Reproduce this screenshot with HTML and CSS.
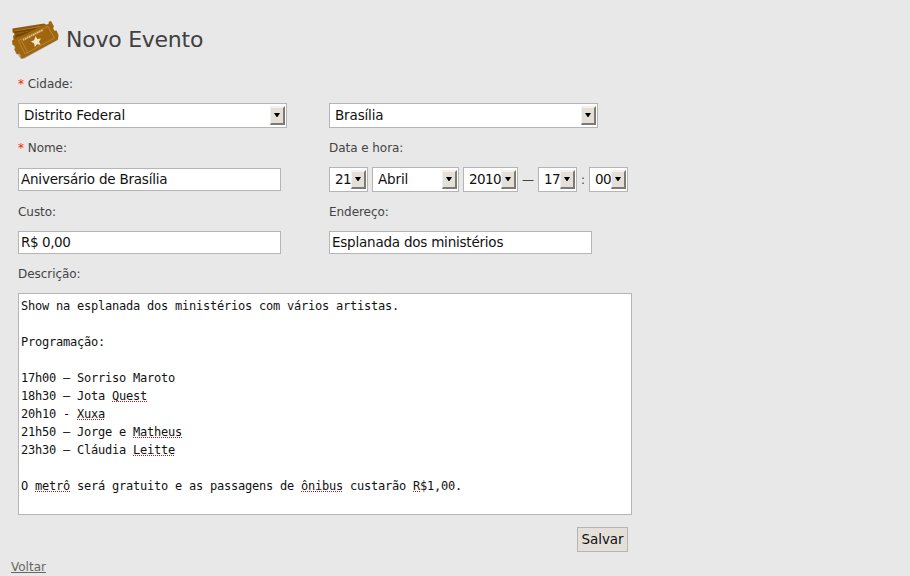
FILE: index.html
```html
<!DOCTYPE html>
<html lang="pt-BR">
<head>
<meta charset="utf-8">
<title>Novo Evento</title>
<link rel="stylesheet" href="styles.css">
</head>
<body>
<header class="header">
<svg class="logo" width="50" height="42" viewBox="0 0 50 42">
<path d="M1.500 8.500 33 3.500l7 5-5 14L3 22l-1-6 1.500-1-.5-2-1.500-.5z" fill="#8f590b"/>
<path d="M4 12 28 8M5 16l18-5" stroke="#6b4007" stroke-width="1.500"/>
<path d="M4 11 30 6.500" stroke="#c39345" stroke-width=".6"/>
<path d="M2 22 37 4l10 16-34 18.800-3 .2-3-4-2-1z" fill="#553409" opacity=".35"/>
<path d="M1 20.500 34 4.200l2 .6 1.800-1.300-.2-1.700 2.400-.8 3 5.500-1 1.700 1.500 2.500 2-.2 2 4.500-.5 4.500L13.500 37.500l-2.500 1-1.500-1.300.3-2-1.800-1.800-2 .6-2.800-4.500 1.300-1.700-1-2.300-2-.5z" fill="#a0650f"/>
<path d="M7.500 20.500 37 6.500 43.500 18 14 34zM10 19.500l6.500 12.700" fill="none" stroke="#c6943f" stroke-width=".7"/>
<path d="M12 20 32 10" stroke="#dcc08a" stroke-width="1.800" stroke-dasharray="1.500 .5 2 .5"/>
<path d="m24.500 16 1.800 3 3.700-.5-2 3.200 1.700 3.100-3.600-.5-2.300 2.700-.7-3.700-3.200-1.500 3.400-1.800z" fill="#f4e6c8"/>
</svg>
<h1 class="title">Novo Evento</h1>
</header>
<form class="form">
<div class="fields">
<div class="field"><div class="label"><span class="required">*</span> Cidade:</div>
<div class="control"><span class="select wide"><span class="value">Distrito Federal</span><i class="arrow"></i></span></div></div>
<div class="field"><div class="label"></div>
<div class="control"><span class="select wide"><span class="value">Brasília</span><i class="arrow"></i></span></div></div>
<div class="field"><div class="label"><span class="required">*</span> Nome:</div>
<div class="control"><input class="input name" value="Aniversário de Brasília" spellcheck="false"></div></div>
<div class="field"><div class="label date-label">Data e hora:</div>
<div class="control date"><span class="select small"><span class="value">21</span><i class="arrow"></i></span><span class="select month"><span class="value">Abril</span><i class="arrow"></i></span><span class="select year"><span class="value">2010</span><i class="arrow"></i></span><span class="dash">—</span><span class="select small"><span class="value">17</span><i class="arrow"></i></span><span class="colon">:</span><span class="select small"><span class="value">00</span><i class="arrow"></i></span></div></div>
<div class="field"><div class="label">Custo:</div>
<div class="control low"><input class="input cost" value="R$ 0,00" spellcheck="false"></div></div>
<div class="field"><div class="label">Endereço:</div>
<div class="control low"><input class="input" value="Esplanada dos ministérios" spellcheck="false"></div></div>
</div>
<div class="label desc">Descrição:</div>
<div class="textarea">Show na esplanada dos ministérios com vários artistas.

Programação:

17h00 – Sorriso Maroto
18h30 – Jota <u>Quest</u>
20h10 - <u>Xuxa</u>
21h50 – Jorge e <u>Matheus</u>
23h30 – Cláudia <u>Leitte</u>

O <u>metrô</u> será gratuito e as passagens de <u>ônibus</u> custarão <u>R</u>$1,00.</div>
<div class="actions"><button class="save" type="button">Salvar</button></div>
</form>
<a class="back" href="#">Voltar</a>
</body>
</html>
```

FILE: styles.css
```css
* { box-sizing: border-box; }
body {
  margin: 0;
  height: 576px;
  overflow: hidden;
  background: #e8e8e8;
  color: #444;
  font: 12px/20px "DejaVu Sans", sans-serif;
}
.header { display: flex; height: 74px; padding: 19px 0 0 10px; }
.logo { flex: none; margin: 1px -1px 0 1px; }
.title { margin: 6px 0 0 6px; font-size: 22px; line-height: 30px; font-weight: 400; letter-spacing: -.25px; color: #404040; }
.form { width: 614px; margin-left: 18px; }
.fields { display: grid; grid-template-columns: 311px 303px; row-gap: 10px; }
.label { height: 20px; margin-bottom: 9px; white-space: nowrap; letter-spacing: -.05px; }
.required { color: #f20; }
.control { display: flex; align-items: center; height: 25px; }
.low { height: 23px; }
.select {
  display: flex;
  flex: none;
  height: 25px;
  padding: 2px 1px 2px 5px;
  border: 1px solid #b5b5b5;
  background: #fff;
  color: #111;
  font-size: 13.5px;
  line-height: 19px;
  letter-spacing: -.15px;
}
.value { flex: 1; width: 0; white-space: nowrap; }
.small .value, .year .value { letter-spacing: -.58px; }
.arrow {
  display: flex;
  flex: none;
  justify-content: center;
  width: 15px;
  height: 19px;
  border: 1px solid;
  border-width: 2px 2px 2px 1px;
  border-color: #f3f1ee #7e7a73 #7e7a73 #f3f1ee;
  background: #e4e0d9;
}
.arrow::before {
  content: "";
  width: 6px;
  height: 4px;
  margin-top: 5px;
  background: #000;
  clip-path: polygon(0 0, 100% 0, 57% 100%, 43% 100%);
}
.wide { width: 269px; }
.small { width: 39px; }
.month { width: 87px; margin: 0 4px; }
.year { width: 55px; }
.dash { width: 20px; text-align: center; }
.colon { width: 12px; text-align: center; }
.input {
  width: 263px;
  height: 23px;
  padding: 0 2px 2px;
  border: 1px solid #b5b5b5;
  border-radius: 0;
  outline: 0;
  background: #fff;
  color: #111;
  font: 13.5px "DejaVu Sans", sans-serif;
  letter-spacing: -.22px;
}
.cost { letter-spacing: -.42px; }
.desc { margin-top: 10px; }
.textarea {
  height: 222px;
  padding: 3px 2px;
  border: 1px solid #b5b5b5;
  background: #fff;
  color: #111;
  font: 12px/18px "DejaVu Sans Mono", monospace;
  letter-spacing: -.224px;
  white-space: pre;
}
.textarea u {
  text-decoration: none;
  background: repeating-linear-gradient(90deg, #d01010 0 1px, transparent 1px 2px) 0 calc(100% - 1px) / 100% 1px no-repeat;
}
.actions { display: flex; justify-content: flex-end; padding: 12px 4px 0 0; }
.save {
  width: 51px;
  height: 25px;
  padding: 0 0 2px;
  border: 1px solid #b5b5b5;
  background: #e4e0d9;
  color: #111;
  font: 13.5px "DejaVu Sans", sans-serif;
  letter-spacing: -.1px;
  white-space: nowrap;
}
.back { display: block; width: max-content; margin: 5px 0 0 11px; color: #666; }
```
